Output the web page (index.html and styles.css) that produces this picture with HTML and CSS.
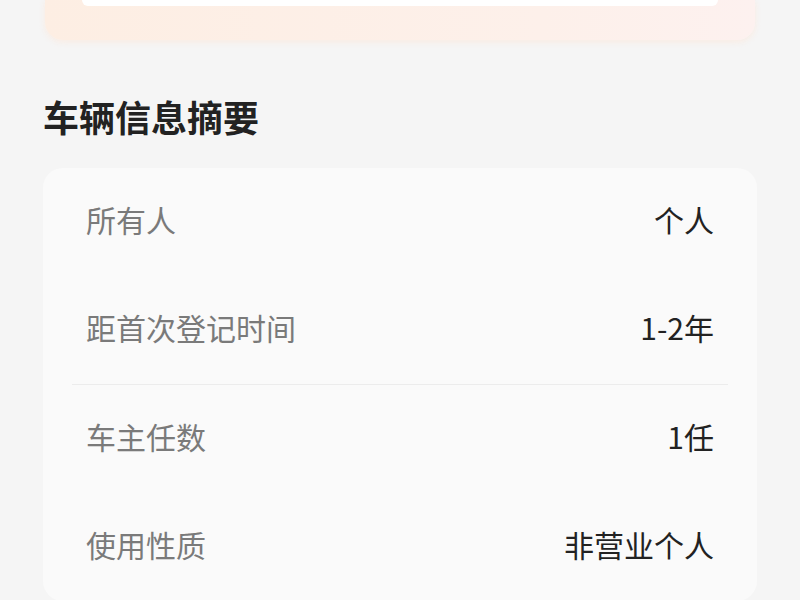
FILE: index.html
```html
<!DOCTYPE html>
<html lang="zh-CN">
<head>
    <meta charset="UTF-8">
    <meta name="viewport" content="width=device-width, initial-scale=1.0">
    <title>车辆信息摘要</title>
    <link rel="stylesheet" href="styles.css">
</head>
<body>
    <div class="page">
        <!-- Report header card (scrolled up) -->
        <div class="report-card">
            <div class="report-inner"></div>
        </div>

        <h2 class="section-title">车辆信息摘要</h2>

        <div class="info-card">
            <div class="info-group">
                <div class="info-row">
                    <span class="info-label">所有人</span>
                    <span class="info-value">个人</span>
                </div>
                <div class="info-row">
                    <span class="info-label">距首次登记时间</span>
                    <span class="info-value">1-2年</span>
                </div>
            </div>
            <div class="info-group">
                <div class="info-row">
                    <span class="info-label">车主任数</span>
                    <span class="info-value">1任</span>
                </div>
                <div class="info-row">
                    <span class="info-label">使用性质</span>
                    <span class="info-value">非营业个人</span>
                </div>
            </div>
        </div>

        <!-- Watermarks -->
        <span class="watermark wm-1">懂车帝</span>
        <span class="watermark wm-2">懂车帝</span>
        <span class="watermark wm-3">懂车帝</span>
        <span class="watermark wm-4">懂车帝</span>
    </div>
</body>
</html>
```

FILE: styles.css
```css
* {
    margin: 0;
    padding: 0;
    box-sizing: border-box;
    font-family: "Noto Sans CJK SC", "Noto Sans", sans-serif;
}

body {
    min-height: 100vh;
    background: #f5f5f5;
    overflow: hidden;
}

.page {
    position: relative;
    padding: 0 43px;
}

.report-card {
    height: 40px;
    margin: 0 2px;
    padding: 0 37px;
    background: linear-gradient(90deg, #fdeee3, #fdf0ea 70%, #fdf1ef);
    border-radius: 0 0 18px 18px;
    box-shadow: 0 2px 6px rgba(253, 230, 215, 0.6);
}

.report-inner {
    height: 6px;
    background: #fff;
    border-radius: 0 0 8px 8px;
}

.section-title {
    margin-top: 52px;
    font-size: 36px;
    line-height: 48px;
    font-weight: 700;
    color: #222;
}

.info-card {
    margin-top: 28px;
    background: #fafafa;
    border-radius: 20px;
    padding: 0 29px;
}

.info-group + .info-group {
    border-top: 1px solid #ececec;
}

.info-row {
    display: flex;
    justify-content: space-between;
    align-items: center;
    height: 108px;
    padding: 0 14px 7px;
    font-size: 30px;
}

.info-label {
    color: #7a7a7a;
}

.info-value {
    color: #222;
}

.watermark {
    position: absolute;
    font-size: 40px;
    font-weight: 700;
    color: rgba(0, 0, 0, 0.025);
    transform: rotate(-25deg);
    pointer-events: none;
}

.wm-1 { left: 70px; top: 215px; }
.wm-2 { left: 405px; top: 300px; }
.wm-3 { left: 690px; top: 235px; }
.wm-4 { left: 280px; top: 495px; }
```
